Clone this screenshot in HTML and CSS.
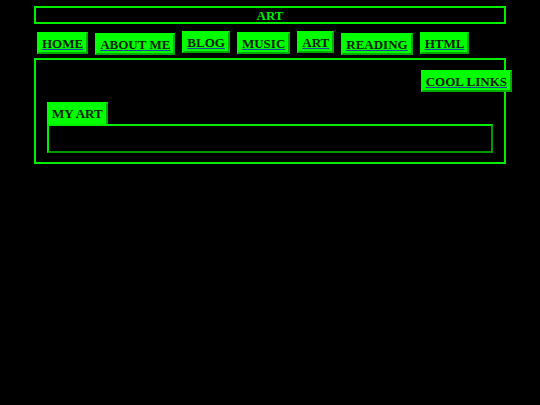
FILE: index.html
```html
<!DOCTYPE html>
<html>
<head>
<meta charset="utf-8">
<title>ART</title>
<link rel="stylesheet" href="styles.css">
</head>
<body>
<header class="title-bar">ART</header>
<nav class="nav">
  <a class="btn off1" href="#">HOME</a>
  <a class="btn off2" href="#">ABOUT ME</a>
  <a class="btn off0" href="#">BLOG</a>
  <a class="btn off1" href="#">MUSIC</a>
  <a class="btn off0" href="#">ART</a>
  <a class="btn off2" href="#">READING</a>
  <a class="btn off1" href="#">HTML</a>
</nav>
<main class="panel">
  <div class="links-row">
    <a class="btn cool" href="#">COOL LINKS</a>
  </div>
  <div class="section-label">MY ART</div>
  <div class="gallery"></div>
</main>
</body>
</html>
```
FILE: styles.css
```css
html, body {
  background: #000;
}
body {
  margin: 0;
  padding: 6px 34px 0;
  font-family: "Liberation Serif", "Times New Roman", serif;
  font-weight: bold;
  font-size: 13px;
}
.title-bar {
  border: 2px solid #00ee00;
  color: #00ee00;
  text-align: center;
  line-height: 15px;
  height: 14px;
}
.nav {
  display: flex;
  align-items: flex-start;
  gap: 7px;
  padding-left: 3px;
  margin-top: 7px;
  height: 27px;
}
.btn {
  display: block;
  background: #00ff00;
  border: 2px outset #00ff00;
  padding: 2px 3px 1px;
  line-height: 16px;
  height: 15px;
  color: #082008;
  text-decoration: underline;
  text-decoration-color: #23409a;
  white-space: nowrap;
}
.off0 { margin-top: 0; }
.off1 { margin-top: 1px; }
.off2 { margin-top: 2px; }
.panel {
  border: 2px solid #00ee00;
  padding: 10px 11px 9px;
}
.links-row {
  display: flex;
  justify-content: flex-end;
  margin-right: -19px;
  margin-bottom: 10px;
}
.section-label {
  display: inline-block;
  vertical-align: top;
  background: #00ff00;
  border: 2px outset #00ff00;
  border-bottom: 0;
  padding: 2px 3px 3px;
  line-height: 16px;
  height: 15px;
  color: #082008;
}
.gallery {
  border: 2px outset #00ee00;
  height: 25px;
}
```
